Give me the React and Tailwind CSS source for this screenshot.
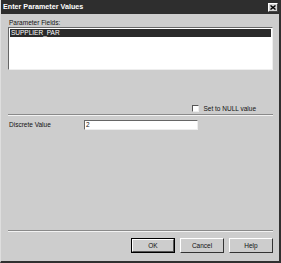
export default function App() {
  return (
    <div
      className="w-[281px] h-[263px] bg-[#cdcdcd] flex flex-col border-r-2 border-b-2 border-[#303030] border-l border-l-[#dedede] text-[#111] text-[6.5px] leading-[8px]"
      style={{ fontFamily: '"Liberation Sans", Arial, sans-serif' }}
    >
      <div className="h-[14px] bg-[#2e2e2e] flex items-center justify-between pl-[2px] pr-[1px]">
        <span className="text-white font-bold text-[7.2px] leading-[8px]">Enter Parameter Values</span>
        <div className="w-[10px] h-[9px] bg-[#d4d4d4] border border-t-white border-l-white border-r-[#444] border-b-[#444] flex items-center justify-center">
          <svg width="6" height="5" viewBox="0 0 6 5">
            <path d="M0.5 0.5 L5.5 4.5 M5.5 0.5 L0.5 4.5" stroke="#000" strokeWidth="1.4" />
          </svg>
        </div>
      </div>
      <div className="flex flex-col pl-[7px] pr-[6px]">
        <div className="mt-[5px] h-[8px] pl-[1px]">Parameter Fields:</div>
        <div className="h-[43px] bg-white border border-t-[#666] border-l-[#666] border-r-[#eee] border-b-[#eee] pt-[1px] px-[1px]">
          <div className="h-[8px] bg-[#2a2a2a] text-white pl-[1px]">SUPPLIER_PAR</div>
        </div>
        <div className="mt-[34px] h-[9px] flex items-center justify-end pr-[17px] gap-[4px]">
          <div className="w-[7px] h-[7px] bg-white border border-t-[#555] border-l-[#555] border-r-[#eee] border-b-[#eee]" />
          <span>Set to NULL value</span>
        </div>
        <div className="mt-[1px] h-[2px] border-t border-t-[#8a8a8a] border-b border-b-[#f2f2f2]" />
        <div className="mt-[4px] h-[10px] flex items-center">
          <span className="w-[76px] pl-[1px]">Discrete Value</span>
          <div className="w-[114px] h-[10px] bg-white border border-t-[#666] border-l-[#666] border-r-[#eee] border-b-[#eee] pl-[1px] leading-[8px]">2</div>
        </div>
        <div className="mt-[100px] h-[2px] border-t border-t-[#8a8a8a] border-b border-b-[#f2f2f2]" />
        <div className="mt-[6px] flex justify-end gap-[5px] pr-[0px]">
          <div className="w-[44px] h-[15px] border border-black">
            <div className="w-full h-full flex items-center justify-center border border-t-white border-l-white border-r-[#555] border-b-[#555]">OK</div>
          </div>
          <div className="w-[44px] h-[15px] flex items-center justify-center border border-t-white border-l-white border-r-[#333] border-b-[#333]">Cancel</div>
          <div className="w-[44px] h-[15px] flex items-center justify-center border border-t-white border-l-white border-r-[#333] border-b-[#333]">Help</div>
        </div>
      </div>
    </div>
  );
}
